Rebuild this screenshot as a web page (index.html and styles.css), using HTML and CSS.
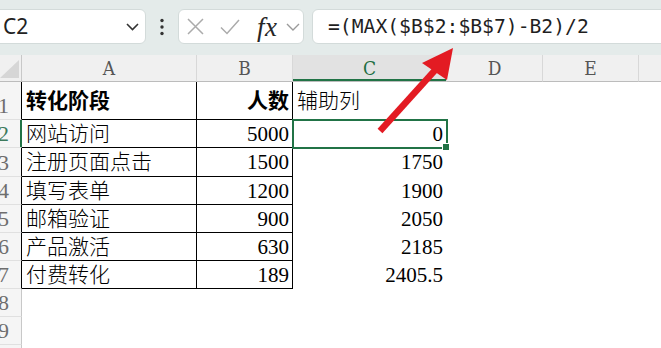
FILE: index.html
```html
<!DOCTYPE html>
<html lang="zh-CN">
<head>
<meta charset="utf-8">
<title>Sheet</title>
<link rel="stylesheet" href="styles.css">
</head>
<body>
<div class="app">
  <div class="toolbar">
    <div class="namebox">
      <span class="ref">C2</span>
      <svg class="chev" width="13" height="8" viewBox="0 0 13 8"><path d="M1 1 L6.5 6.5 L12 1" fill="none" stroke="#333" stroke-width="1.6"/></svg>
    </div>
    <div class="dots">
      <svg width="6" height="18" viewBox="0 0 6 18"><circle cx="3" cy="2.5" r="1.7" fill="#333"/><circle cx="3" cy="9" r="1.7" fill="#333"/><circle cx="3" cy="15.5" r="1.7" fill="#333"/></svg>
    </div>
    <div class="fbtns">
      <svg class="ic-x" width="17" height="17" viewBox="0 0 17 17"><path d="M1 1 L16 16 M16 1 L1 16" fill="none" stroke="#ababab" stroke-width="1.5"/></svg>
      <svg class="ic-ok" width="20" height="16" viewBox="0 0 20 16"><path d="M1 8.5 L7 14.5 L19 1" fill="none" stroke="#ababab" stroke-width="1.5"/></svg>
      <span class="fx">fx</span>
      <svg class="ic-dd" width="14" height="8" viewBox="0 0 14 8"><path d="M1 1 L7 7 L13 1" fill="none" stroke="#9a9a9a" stroke-width="1.4"/></svg>
    </div>
    <div class="formula">=(MAX($B$2:$B$7)-B2)/2</div>
  </div>

  <table class="sheet">
    <colgroup>
      <col class="w-rh"><col class="w-a"><col class="w-b"><col class="w-c"><col class="w-d"><col class="w-e"><col class="w-f">
    </colgroup>
    <thead>
      <tr class="hdr">
        <th class="corner"><svg width="36" height="26" viewBox="0 0 36 26"><polygon points="33,5 33,23 14,23" fill="#d6d6d6"/></svg></th>
        <th class="ch">A</th>
        <th class="ch">B</th>
        <th class="ch ch-sel">C</th>
        <th class="ch">D</th>
        <th class="ch">E</th>
        <th class="ch"></th>
      </tr>
    </thead>
    <tbody>
      <tr class="r1">
        <th class="rh bk">1</th>
        <td class="b bold">转化阶段</td>
        <td class="b bold num">人数</td>
        <td>辅助列</td>
        <td></td><td></td><td></td>
      </tr>
      <tr class="r">
        <th class="rh bk rh-sel">2</th>
        <td class="b">网站访问</td>
        <td class="b num">5000</td>
        <td class="num c2">0</td>
        <td></td><td></td><td></td>
      </tr>
      <tr class="r r-tall">
        <th class="rh bk">3</th>
        <td class="b">注册页面点击</td>
        <td class="b num">1500</td>
        <td class="num">1750</td>
        <td></td><td></td><td></td>
      </tr>
      <tr class="r">
        <th class="rh bk">4</th>
        <td class="b">填写表单</td>
        <td class="b num">1200</td>
        <td class="num">1900</td>
        <td></td><td></td><td></td>
      </tr>
      <tr class="r">
        <th class="rh bk">5</th>
        <td class="b">邮箱验证</td>
        <td class="b num">900</td>
        <td class="num">2050</td>
        <td></td><td></td><td></td>
      </tr>
      <tr class="r">
        <th class="rh bk">6</th>
        <td class="b">产品激活</td>
        <td class="b num">630</td>
        <td class="num">2185</td>
        <td></td><td></td><td></td>
      </tr>
      <tr class="r">
        <th class="rh bk">7</th>
        <td class="b">付费转化</td>
        <td class="b num">189</td>
        <td class="num">2405.5</td>
        <td></td><td></td><td></td>
      </tr>
      <tr class="r">
        <th class="rh">8</th>
        <td></td><td></td><td></td><td></td><td></td><td></td>
      </tr>
      <tr class="r">
        <th class="rh">9</th>
        <td></td><td></td><td></td><td></td><td></td><td></td>
      </tr>
      <tr class="r">
        <th class="rh">10</th>
        <td></td><td></td><td></td><td></td><td></td><td></td>
      </tr>
    </tbody>
  </table>

  <svg class="arrow" width="661" height="348" viewBox="0 0 661 348">
    <line x1="380" y1="131" x2="437" y2="68" stroke="#e31b23" stroke-width="6.5"/>
    <polygon points="453,48 422,63 447,80" fill="#e31b23"/>
  </svg>
</div>
</body>
</html>
```
FILE: styles.css
```css
html, body {
  margin: 0;
  padding: 0;
}

body {
  width: 661px;
  height: 348px;
  overflow: hidden;
  background: #ffffff;
  font-family: "Liberation Serif", "Noto Sans CJK SC", serif;
}

.app {
  position: relative;
  width: 661px;
  height: 348px;
  overflow: hidden;
}

/* ---------- formula toolbar ---------- */
.toolbar {
  display: flex;
  align-items: flex-start;
  height: 55px;
  box-sizing: border-box;
  padding-top: 9px;
  background: #e4ebea;
}

.namebox {
  flex: none;
  display: flex;
  align-items: center;
  justify-content: space-between;
  box-sizing: border-box;
  width: 152px;
  height: 35px;
  margin-left: -6px;
  padding: 0 6px 0 8px;
  background: #ffffff;
  border: 1px solid #d3dbda;
  border-radius: 6px;
}

.ref {
  font-family: "Noto Sans", "Liberation Sans", sans-serif;
  font-size: 21px;
  line-height: 1;
  color: #222222;
}

.chev {
  display: block;
}

.dots {
  flex: none;
  display: flex;
  align-items: center;
  justify-content: center;
  width: 32px;
  height: 35px;
}

.dots svg {
  display: block;
}

.fbtns {
  flex: none;
  display: flex;
  align-items: center;
  box-sizing: border-box;
  width: 126px;
  height: 35px;
  padding-left: 8px;
  background: #ffffff;
  border: 1px solid #d3dbda;
  border-radius: 6px;
}

.fbtns svg {
  display: block;
  flex: none;
}

.ic-ok {
  margin-left: 16px;
}

.fx {
  margin-left: 17px;
  font-family: "Liberation Serif", serif;
  font-style: italic;
  font-size: 27px;
  line-height: 1;
  letter-spacing: 0.5px;
  color: #262626;
  margin-top: 2px;
}

.ic-dd {
  margin-left: 8px;
}

.formula {
  flex: none;
  box-sizing: border-box;
  width: 400px;
  height: 35px;
  margin-left: 8px;
  padding-left: 15px;
  background: #ffffff;
  border: 1px solid #d3dbda;
  border-radius: 6px;
  font-family: "DejaVu Sans Mono", "Liberation Mono", monospace;
  font-size: 19.7px;
  line-height: 33px;
  color: #1f1f1f;
  white-space: nowrap;
}

/* ---------- grid ---------- */
.sheet {
  border-collapse: separate;
  border-spacing: 0;
  table-layout: fixed;
  width: 749px;
  margin-left: -14px;
}

.w-rh { width: 36px; }
.w-a { width: 175px; }
.w-b { width: 96px; }
.w-c { width: 154px; }
.w-d { width: 96px; }
.w-e { width: 96px; }
.w-f { width: 96px; }

.hdr { height: 27px; }
.r1 { height: 38px; }
.r { height: 28px; }
.r-tall { height: 29px; }

.sheet th,
.sheet td {
  padding: 0 4px;
  border-right: 1px solid transparent;
  border-bottom: 1px solid transparent;
  white-space: nowrap;
  overflow: hidden;
  vertical-align: middle;
  line-height: 24px;
  font-size: 21px;
  color: #000000;
  text-align: left;
}

.sheet td {
  font-weight: 300;
}

.sheet .corner {
  padding: 0;
  background: #f0f0f0;
  border-right: 1px solid #c8c8c8;
  border-bottom: 1px solid #bcbcbc;
  vertical-align: top;
}

.corner svg {
  display: block;
}

.sheet .ch {
  padding: 0;
  background: #f0f0f0;
  border-right: 1px solid #d8d8d8;
  border-bottom: 1px solid #bcbcbc;
  font-family: "DejaVu Serif Condensed", "DejaVu Serif", serif;
  font-stretch: condensed;
  font-weight: normal;
  font-size: 19px;
  color: #555555;
  text-align: center;
  vertical-align: bottom;
  line-height: 25px;
}

.sheet .ch-sel {
  background: #e2e2e2;
  color: #1e6e43;
  box-shadow: inset 0 -2px 0 #217346;
}

.sheet .rh {
  padding: 0;
  background: #f5f5f5;
  border-right: 1px solid #c8c8c8;
  border-bottom: 1px solid #e0e0e0;
  font-family: "Liberation Serif", serif;
  font-weight: normal;
  font-size: 22px;
  color: #6e6e6e;
  text-align: center;
  vertical-align: bottom;
  line-height: 26px;
}

.sheet .rh.bk {
  border-right-color: #000000;
}

.sheet .rh.rh-sel {
  border-right-color: #217346;
  box-shadow: inset -1px 0 0 #217346;
  color: #3d7a5c;
}

.sheet .b {
  border-right-color: #000000;
  border-bottom-color: #000000;
}

.sheet .bold {
  font-weight: 700;
}

.sheet .num {
  text-align: right;
  padding-right: 3px;
}

.sheet .c2 {
  position: relative;
  overflow: visible;
  outline: 2px solid #217346;
  outline-offset: -1px;
}

.sheet .c2::after {
  content: "";
  position: absolute;
  right: -4px;
  bottom: -4px;
  width: 6px;
  height: 6px;
  background: #217346;
  border: 1px solid #ffffff;
  z-index: 2;
}

/* ---------- annotation ---------- */
.arrow {
  position: absolute;
  left: 0;
  top: 0;
  pointer-events: none;
  z-index: 5;
}
```
